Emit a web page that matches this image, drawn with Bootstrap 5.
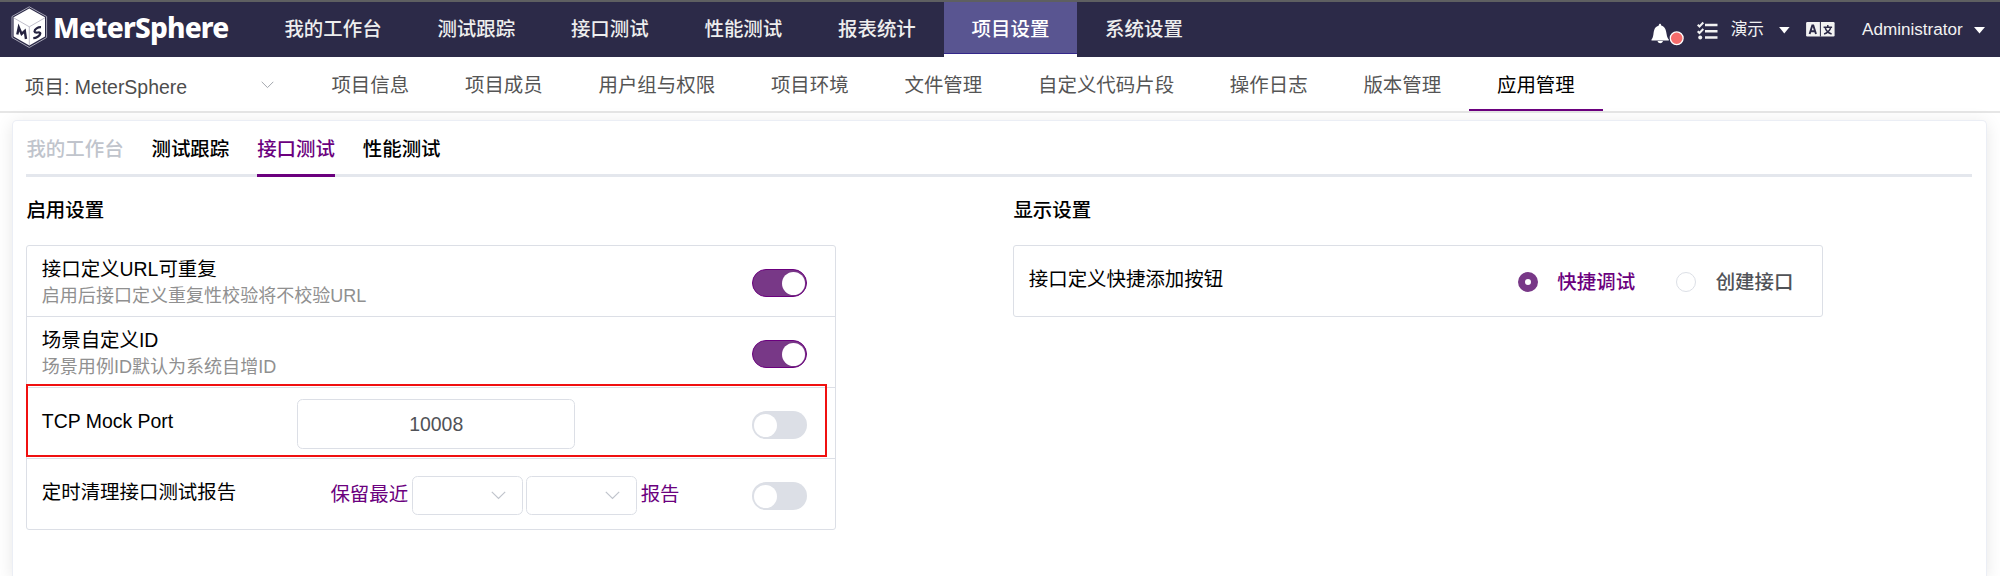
<!DOCTYPE html>
<html lang="zh-CN">
<head>
<meta charset="utf-8">
<title>MeterSphere</title>
<meta name="viewport" content="width=device-width, initial-scale=1">
<link href="https://cdn.jsdelivr.net/npm/bootstrap@5.3.0/dist/css/bootstrap.min.css" rel="stylesheet">
<style>
  body { font-family: "Liberation Sans", "Noto Sans CJK SC", sans-serif; font-size: 19.45px; line-height: 26px; color: #000; background: #fff; height: 576px; overflow: hidden; }
  .topbar { height: 57px; background: #2c2a48; border-top: 2px solid #5e5f61; }
  .brand-zone { width: 256.5px; padding-left: 11px; }
  .brand-name { font-family: "Noto Sans", sans-serif; font-weight: 800; font-size: 28px; letter-spacing: -.8px; line-height: 34px; color: #fff; padding-left: 1px; }
  .main-link { padding: 14px 27.9px 0; color: #eee; font-weight: 500; white-space: nowrap; text-decoration: none; }
  .main-link.active { background: #595591; color: #fff; border-bottom: 1px solid #33278a; box-shadow: 0 3px 0 #fff; height: 52px; }
  .user-zone { color: #f2f2f2; font-size: 16.7px; padding-right: 14px; }
  .admin-name { font-size: 17.1px; width: 101.5px; margin-right: .5px; }
  .subbar { height: 56px; border-bottom: 2px solid #e6e6e6; }
  .project-pick { width: 303.5px; padding: 17px 30px 0 25px; color: #4d4d4d; }
  .project-pick svg { margin-top: 7px; }
  .sub-link { padding: 15px 27.9px 0; color: #555; white-space: nowrap; text-decoration: none; height: 54px; }
  .sub-link.active { color: #000; border-bottom: 2px solid #6b007e; }
  .panel { margin: 7px 13px 0 12px; height: 456px; border: 1px solid #ebeef5; border-bottom: 0; border-radius: 5px 5px 0 0; box-shadow: 0 3px 17px rgba(0,0,0,.1); padding: 15px 14px 0 13.4px; background: #fff; }
  .tabs { gap: 27.9px; border-bottom: 3px solid #e4e7ed; height: 41px; font-weight: 500; }
  .tabs span { height: 41px; white-space: nowrap; }
  .tabs .active { color: #6b007e; border-bottom: 3px solid #6b007e; }
  .tabs .disabled { color: #c0c4cc; }
  .columns { display: grid; grid-template-columns: 987px 1fr; }
  .group-title { font-weight: 500; padding-top: 20px; height: 68px; }
  .box { width: 810px; border: 1px solid #dcdfe6; border-radius: 3px; }
  .line { height: 71px; padding: 10px 28px 0 14.4px; }
  .line:first-child { height: 70px; }
  .line + .line { border-top: 1px solid #dcdfe6; }
  .hint { font-size: 18.05px; color: #909090; padding-top: 1px; }
  .toggle { width: 55.5px; height: 28px; border-radius: 14px; background: #dcdfe6; padding: 2.5px; margin-top: 13px; }
  .toggle i { width: 23px; height: 23px; border-radius: 50%; background: #fff; }
  .toggle.on { background: #783887; border: 1px solid #6b007e; padding: 1.5px; }
  .field { border: 1px solid #dcdfe6; border-radius: 5.5px; background: #fff; }
  .port-label { width: 255.4px; padding-top: 10px; }
  .port { width: 278px; height: 50px; margin-top: 1px; padding-bottom: 1px; color: #505257; }
  .clean-label { width: 288.600px; padding-top: 10px; }
  .pick { width: 111px; height: 39px; margin-top: 7px; padding-right: 16px; }
  .keep { color: #6b007e; padding-top: 12px; }
  .keep-group { gap: 3.500px; }
  .red-frame { top: 138px; left: -1px; width: 801px; height: 73px; border: 2px solid #f01010; }
  .radio-line { padding: 20px 29px 0 14.400px; }
  .choice { font-weight: 500; color: #505257; gap: 19.500px; margin-top: 3px; }
  .choice.on { color: #6b007e; margin-right: 41px; }
  .dot { width: 20px; height: 20px; border-radius: 50%; border: 1px solid #dcdfe6; }
  .dot.on { border: 7px solid #783887; }
</style>
</head>
<body>
<header class="topbar d-flex">
  <div class="brand-zone d-flex">
    <svg class="mt-1" width="37" height="43" viewBox="0 0 37 43">
      <path d="M18.3 .8 35.6 10.5V31.500L18.3 41.500 1 31.500V10.500Z" fill="none" stroke="#a5a4b5" stroke-width="1"/>
      <path d="M18.300 2.500 34 11.300V30.500L18.300 39.500 2.600 30.500V11.300Z" fill="#fff"/>
      <path d="M2.600 11.800 18.300 20.800 34 11.800M18.300 20.800V39" fill="none" stroke="#aeadbd" stroke-width=".8"/>
      <path d="M6.300 28.500 7.800 21.500 10.600 28 13.800 25 15 33" fill="none" stroke="#252340" stroke-width="2.400"/>
      <path d="M30 21.200C27 21 23.500 23 23.500 25.500 24 28 29.500 25 29.300 27.500 29 30 25 32 22.300 32.200" fill="none" stroke="#252340" stroke-width="2.200"/>
    </svg>
    <span class="brand-name ms-1 mt-2">MeterSphere</span>
  </div>
  <nav class="d-flex flex-grow-1">
    <a class="main-link">我的工作台</a><a class="main-link">测试跟踪</a><a class="main-link">接口测试</a><a class="main-link">性能测试</a><a class="main-link">报表统计</a><a class="main-link active">项目设置</a><a class="main-link">系统设置</a>
  </nav>
  <div class="user-zone d-flex align-items-center">
    <svg width="82" height="55" viewBox="1650 2 82 55">
      <path d="M1652.500 39.500C1655 37 1654 32 1655.800 28.500 1657 26.500 1658.800 26 1659.800 25.500 1659.800 23 1662.200 23 1662.200 25.500 1664 26 1665.500 27 1666.300 29 1668 33 1667.300 37 1669.800 39.500V40.500H1652.500ZM1658.500 41H1664C1663 44 1659.500 44 1658.500 41Z" fill="#fff"/>
      <circle cx="1677.700" cy="38.300" r="6.400" fill="#f56c6c" stroke="#fff" stroke-width="1.300"/>
      <path d="M1706 25H1718.500M1706 31.200H1718.500M1706 37.500H1718.500" stroke="#f2f2f2" stroke-width="2.500"/>
      <path d="M1698.700 24.800 1700.500 26.500 1704.300 22.500M1698.700 31.200 1700.500 33 1704.300 29" fill="none" stroke="#f2f2f2" stroke-width="2"/>
      <circle cx="1701.200" cy="37.500" r="2" fill="#f2f2f2"/>
    </svg>
    <span>演示</span>
    <svg width="98" height="55" viewBox="1765.400 2 98 55">
      <path d="M1780.500 27H1791L1785.700 33.500Z" fill="#fff"/>
      <rect x="1807.500" y="22" width="28.500" height="14.500" rx="1.200" fill="#f2f2f2"/>
      <path d="M1821.800 22V36.500" stroke="#2c2a48" stroke-width="1"/>
      <path d="M1811 34 1813.700 25.500H1814.700L1817.400 34M1812 31.300H1816.400" fill="none" stroke="#2c2a48" stroke-width="1.900"/>
      <path d="M1825 27.200H1833.500M1829.200 25V27.200M1832 28C1831 31 1828.500 33 1825.500 34M1826.700 28C1827.500 31 1830 33 1833 34" fill="none" stroke="#2c2a48" stroke-width="1.500"/>
    </svg>
    <span class="admin-name">Administrator</span>
    <svg width="22" height="55" viewBox="1964 2 22 55"><path d="M1974 27H1985L1979.500 33.500Z" fill="#fff"/></svg>
  </div>
</header>
<div class="subbar d-flex">
  <div class="project-pick d-flex justify-content-between"><span>项目: MeterSphere</span>
    <svg width="13" height="8" viewBox="0 0 13 8"><path d="M.7 .8 6.500 6.600 12.300 .8" fill="none" stroke="#a3a6ad"/></svg>
  </div>
  <nav class="d-flex"><a class="sub-link">项目信息</a><a class="sub-link">项目成员</a><a class="sub-link">用户组与权限</a><a class="sub-link">项目环境</a><a class="sub-link">文件管理</a><a class="sub-link">自定义代码片段</a><a class="sub-link">操作日志</a><a class="sub-link">版本管理</a><a class="sub-link active">应用管理</a></nav>
</div>
<main class="panel">
  <div class="tabs d-flex"><span class="disabled">我的工作台</span><span>测试跟踪</span><span class="active">接口测试</span><span>性能测试</span></div>
  <div class="columns">
    <section>
      <div class="group-title">启用设置</div>
      <div class="box position-relative">
        <div class="line d-flex justify-content-between">
          <div><div>接口定义URL可重复</div><div class="hint">启用后接口定义重复性校验将不校验URL</div></div>
          <span class="toggle on d-flex justify-content-end"><i></i></span>
        </div>
        <div class="line d-flex justify-content-between">
          <div><div>场景自定义ID</div><div class="hint">场景用例ID默认为系统自增ID</div></div>
          <span class="toggle on d-flex justify-content-end"><i></i></span>
        </div>
        <div class="line d-flex">
          <div class="port-label">TCP Mock Port</div>
          <div class="field port d-flex align-items-center justify-content-center">10008</div>
          <span class="toggle d-flex ms-auto"><i></i></span>
        </div>
        <div class="line d-flex">
          <div class="clean-label">定时清理接口测试报告</div>
          <div class="keep-group d-flex">
            <span class="keep">保留最近</span>
            <div class="field pick d-flex align-items-center justify-content-end"><svg width="15" height="9" viewBox="0 0 15 9"><path d="M.8 .8 7.500 7.500 14.200 .8" fill="none" stroke="#c0c4cc" stroke-width="1.200"/></svg></div>
            <div class="field pick d-flex align-items-center justify-content-end"><svg width="15" height="9" viewBox="0 0 15 9"><path d="M.8 .8 7.500 7.500 14.200 .8" fill="none" stroke="#c0c4cc" stroke-width="1.200"/></svg></div>
            <span class="keep">报告</span>
          </div>
          <span class="toggle d-flex ms-auto"><i></i></span>
        </div>
        <div class="red-frame position-absolute"></div>
      </div>
    </section>
    <section>
      <div class="group-title">显示设置</div>
      <div class="box">
        <div class="line radio-line d-flex align-items-start">
          <span>接口定义快捷添加按钮</span>
          <span class="choice on d-flex align-items-center ms-auto"><i class="dot on"></i>快捷调试</span>
          <span class="choice d-flex align-items-center"><i class="dot"></i>创建接口</span>
        </div>
      </div>
    </section>
  </div>
</main>
<script src="https://cdn.jsdelivr.net/npm/bootstrap@5.3.0/dist/js/bootstrap.bundle.min.js"></script>
</body>
</html>
